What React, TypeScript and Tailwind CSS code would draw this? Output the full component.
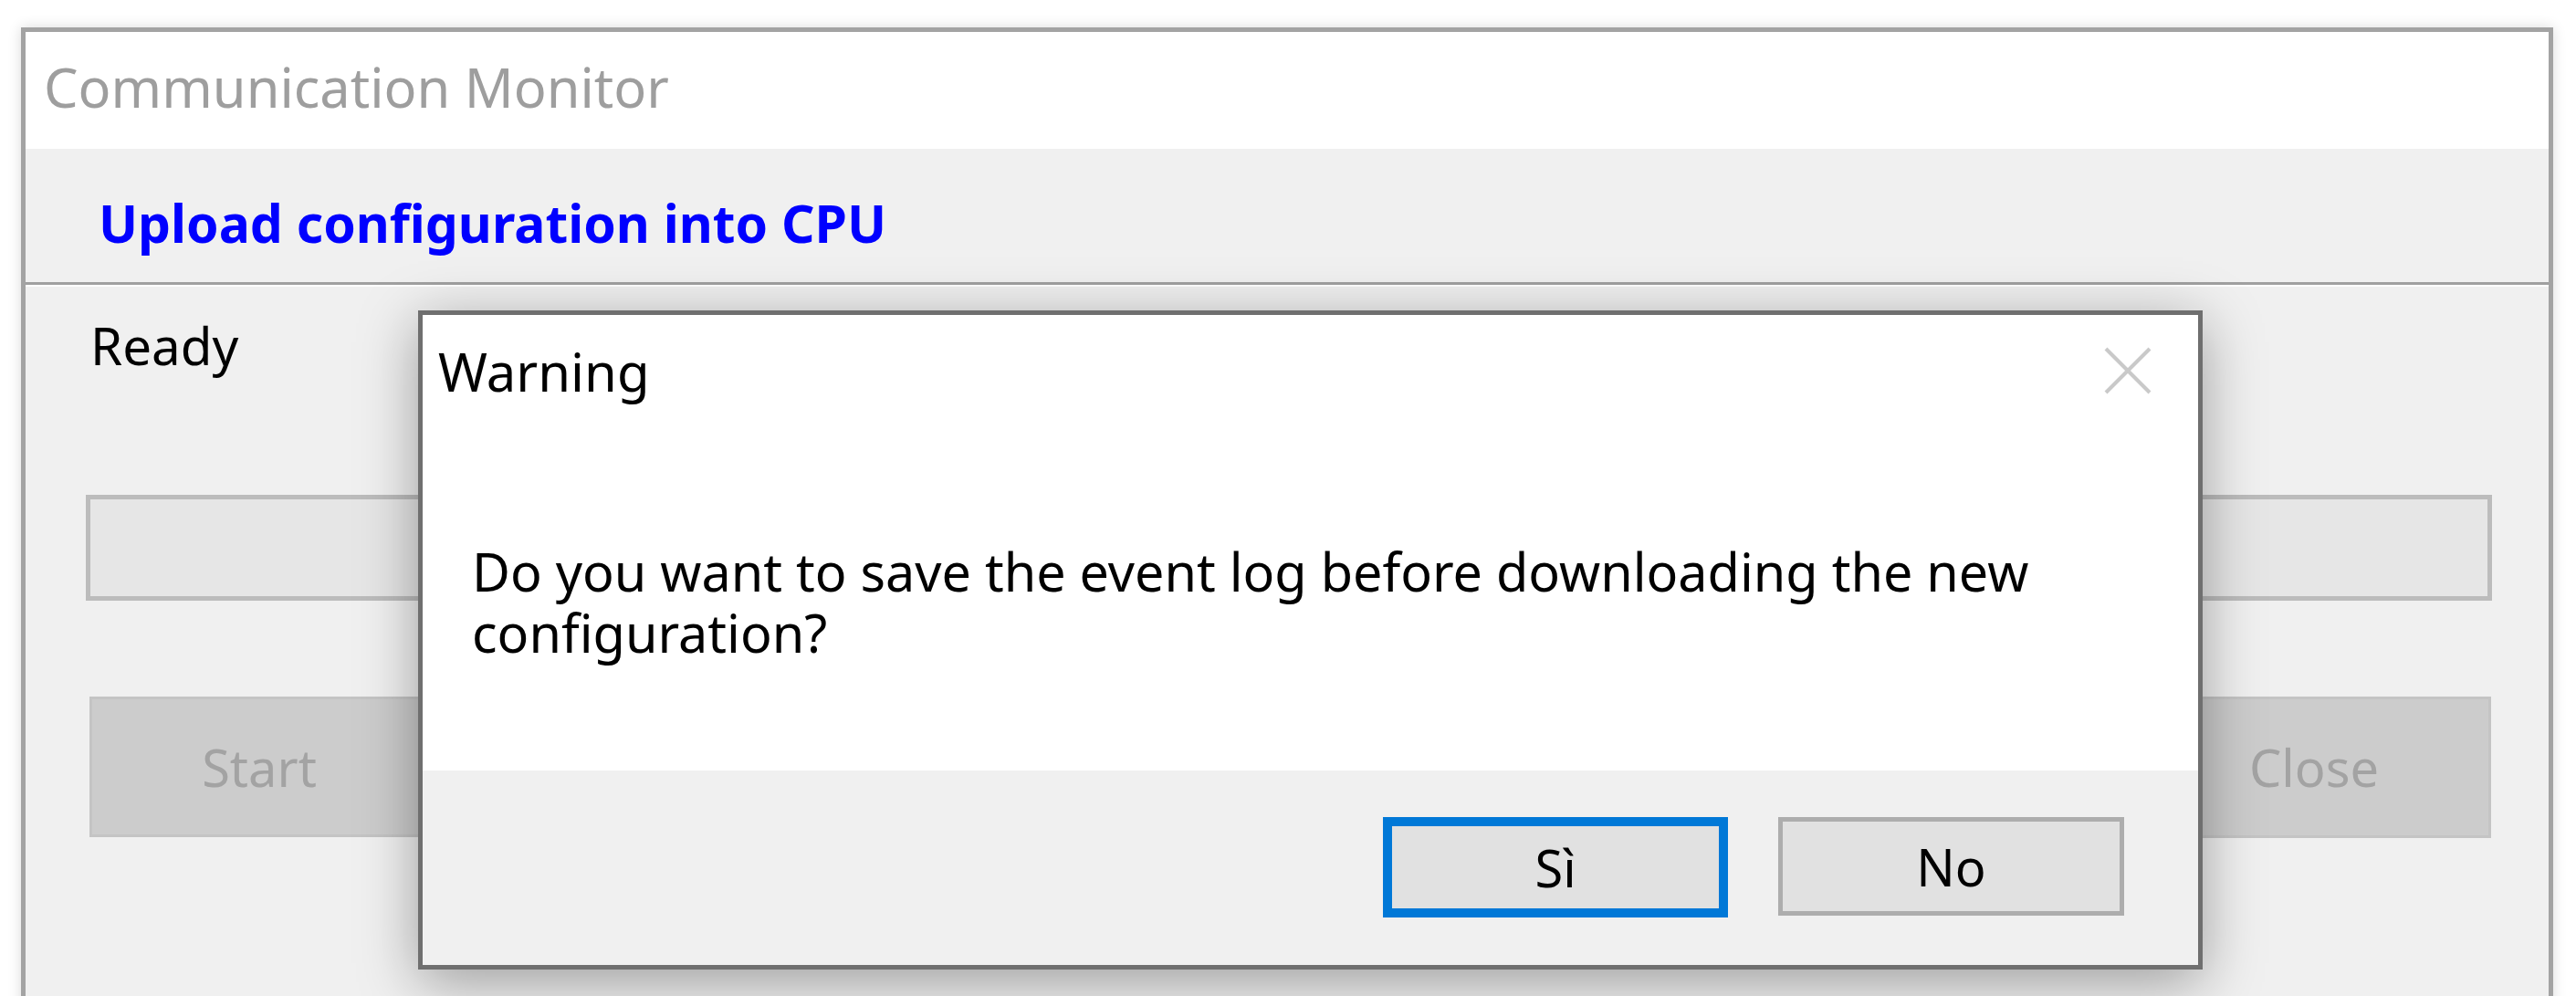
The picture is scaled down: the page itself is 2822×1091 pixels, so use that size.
const CloseGlyph = () => (
  <svg width="52" height="52" viewBox="0 0 52 52" className="mt-[2px] shrink-0">
    <line x1="2" y1="2" x2="50" y2="50" stroke="#c9c9c9" strokeWidth="4" />
    <line x1="50" y1="2" x2="2" y2="50" stroke="#c9c9c9" strokeWidth="4" />
  </svg>
);

const WarningDialog = () => (
  <div className="absolute left-[458px] top-[340px] flex h-[722px] w-[1955px] flex-col border-[5px] border-[#6f6f6f] bg-white shadow-[0_14px_60px_rgba(0,0,0,0.35)]">
    <div className="flex-1 bg-white">
      <div className="flex items-start justify-between pl-[17px] pr-[51px] pt-[33px]">
        <span className="text-[58px] leading-none text-black">Warning</span>
        <CloseGlyph />
      </div>
      <p className="mt-[157px] w-fit pl-[54px] text-[57.5px] leading-[67px] text-black">
        Do you want to save the event log before downloading the new
        <br />
        configuration?
      </p>
    </div>
    <div className="flex h-[213px] items-start justify-end gap-[55px] bg-[#f0f0f0] pr-[81px] pt-[51px]">
      <button className="flex h-[110px] w-[378px] items-center justify-center border-[10px] border-[#0078d7] bg-[#e1e1e1] text-[56px] leading-none text-black">
        Sì
      </button>
      <button className="flex h-[108px] w-[379px] items-center justify-center border-[5px] border-[#adadad] bg-[#e1e1e1] text-[56px] leading-none text-black">
        No
      </button>
    </div>
  </div>
);

export default function App() {
  return (
    <div className="relative h-[1091px] w-[2822px] overflow-hidden bg-white font-['Noto_Sans',sans-serif]">
      <div className="ml-[23px] mt-[30px] flex h-[1200px] w-[2774px] flex-col border-[5px] border-[#a3a3a3] shadow-[0_0_14px_rgba(0,0,0,0.14)]">
        {/* title bar */}
        <div className="h-[128px] shrink-0 bg-white pl-[20px] pt-[30px]">
          <span className="text-[59.5px] leading-none text-[#9e9e9e]">Communication Monitor</span>
        </div>

        {/* operation header */}
        <div className="h-[146px] shrink-0 bg-[#f0f0f0] pl-[80px] pt-[53px]">
          <span className="text-[57px] font-bold leading-none text-[#0000ff]">
            Upload configuration into CPU
          </span>
        </div>
        <div className="h-[3px] shrink-0 bg-[#a0a0a0]" />
        <div className="h-[2px] shrink-0 bg-white" />

        {/* status + progress + actions */}
        <div className="flex flex-1 flex-col items-start bg-[#f0f0f0]">
          <span className="ml-[71px] mt-[37px] text-[56.5px] leading-none text-black">Ready</span>
          <div className="ml-[66px] mt-[134px] h-[116px] w-[2636px] border-[5px] border-[#bcbcbc] bg-[#e6e6e6]" />
          <div className="mt-[105px] flex w-full justify-between pl-[70px] pr-[63px]">
            <button className="h-[154px] w-[372px] border-[3px] border-[#c4c4c4] bg-[#cccccc] text-[56px] leading-none text-[#a3a3a3]">
              Start
            </button>
            <button className="h-[155px] w-[388px] border-[3px] border-[#c4c4c4] bg-[#cccccc] text-[56px] leading-none text-[#a3a3a3]">
              Close
            </button>
          </div>
        </div>
      </div>

      <WarningDialog />
    </div>
  );
}
